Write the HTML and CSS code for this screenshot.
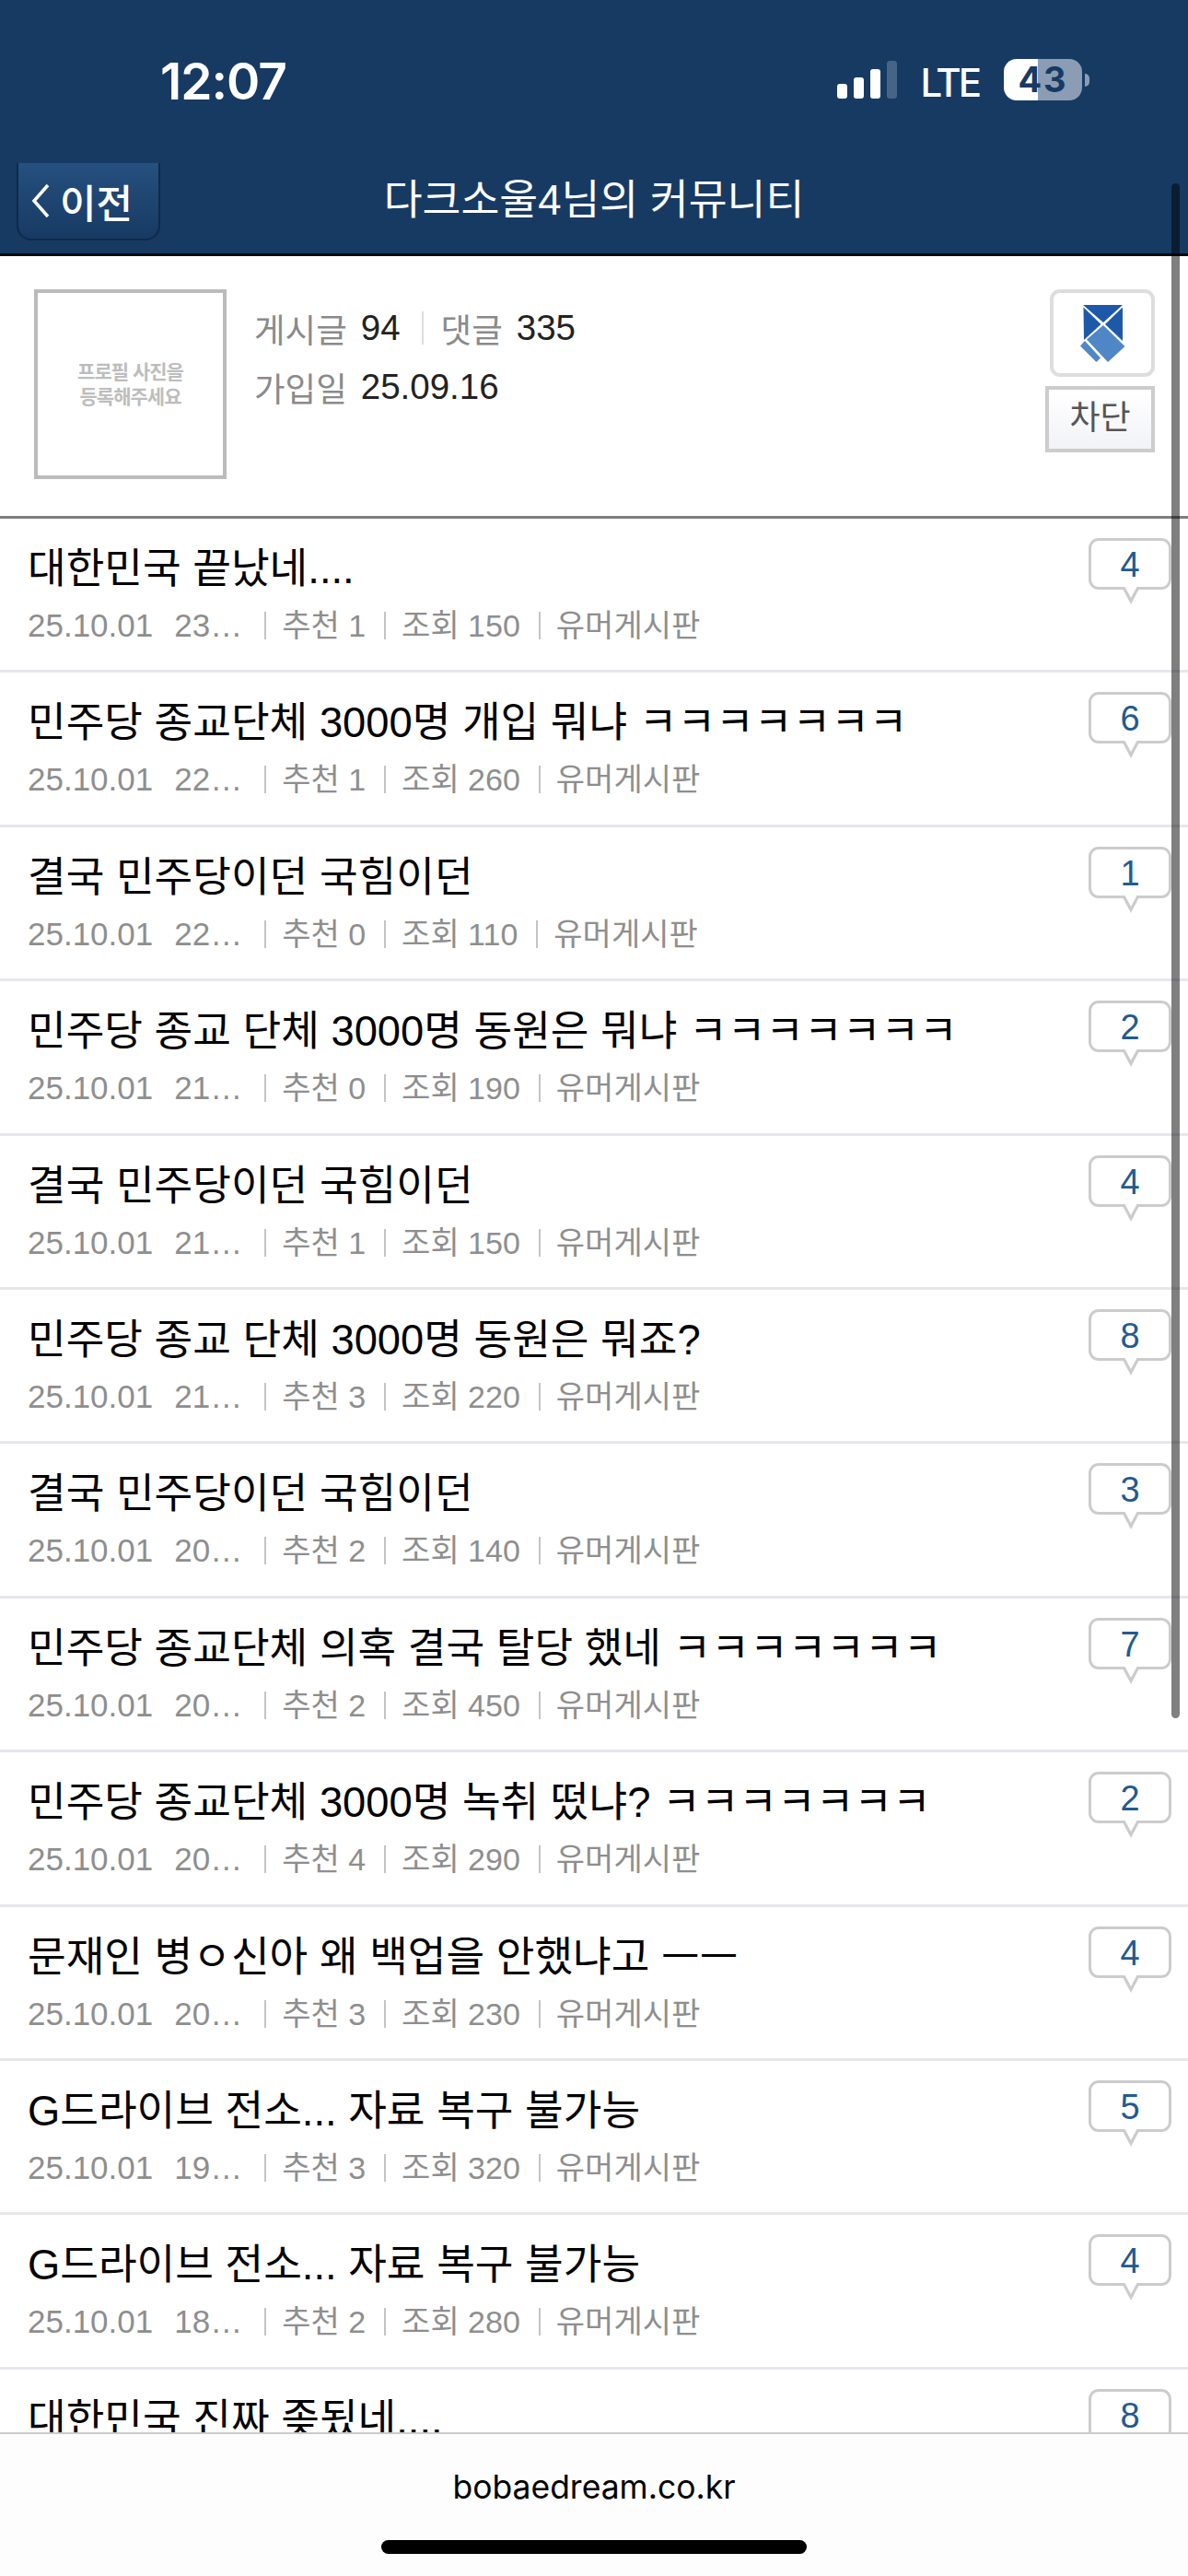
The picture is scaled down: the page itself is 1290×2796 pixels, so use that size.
FILE: index.html

```html
<!DOCTYPE html>
<html lang="ko">
<head>
  <meta charset="UTF-8" />
  <meta name="viewport" content="width=device-width, initial-scale=1.0" />
  <title>다크소울4님의 커뮤니티</title>
  <link rel="stylesheet" href="styles.css">
</head>
<body>
  <div class="top">
    <div class="status">
      <span class="clock">12:07</span>
      <div class="status-right">
        <div class="signal">
          <i class="s1"></i><i class="s2"></i><i class="s3"></i><i class="s4"></i>
        </div>
        <span class="lte">LTE</span>
        <div class="battery"><span>43</span></div>
        <i class="battery-nub"></i>
      </div>
    </div>
    <div class="nav">
      <a class="back">
        <svg class="back-arrow" width="20" height="38" viewBox="0 0 20 38"><path d="M18 2 3 19l15 17" fill="none" stroke="#fff" stroke-width="3.5"/></svg>
        이전
      </a>
      <h1>다크소울4님의 커뮤니티</h1>
    </div>
  </div>

  <div class="profile">
    <div class="photo">프로필 사진을<br>등록해주세요</div>
    <div class="stats">
      <div class="stat-line">
        <span class="label">게시글</span><b>94</b><i class="stat-sep"></i>
        <span class="label">댓글</span><b>335</b>
      </div>
      <div class="stat-line">
        <span class="label">가입일</span><b>25.09.16</b>
      </div>
    </div>
    <div class="actions">
      <div class="badge">
        <svg width="49" height="62" viewBox="0 0 49 62">
          <path d="M3 0H46L25 19Z" fill="#1d59a8"/>
          <path d="M3.500 2.500 22.500 21 4 38Z" fill="#1d59a8"/>
          <path d="M46 2.500 27 21 46 39Z" fill="#1d59a8"/>
          <path d="M25 22 48.500 45 30 62 7 37.500Z" fill="#4f87c6"/>
          <path d="M5 39 22 57.500 17.500 62 0 44.500Z" fill="#4f87c6"/>
        </svg>
      </div>
      <a class="block-btn">차단</a>
    </div>
  </div>

  <ul class="list">
    <li class="row">
      <div class="row-main">
        <div class="subject">대한민국 끝났네....</div>
        <div class="meta"><span class="date">25.10.01</span><span class="time">23…</span><span>추천 1</span><span>조회 150</span><span>유머게시판</span></div>
      </div>
      <div class="bubble">4</div>
    </li>
    <li class="row">
      <div class="row-main">
        <div class="subject">민주당 종교단체 3000명 개입 뭐냐 ㅋㅋㅋㅋㅋㅋㅋ</div>
        <div class="meta"><span class="date">25.10.01</span><span class="time">22…</span><span>추천 1</span><span>조회 260</span><span>유머게시판</span></div>
      </div>
      <div class="bubble">6</div>
    </li>
    <li class="row">
      <div class="row-main">
        <div class="subject">결국 민주당이던 국힘이던</div>
        <div class="meta"><span class="date">25.10.01</span><span class="time">22…</span><span>추천 0</span><span>조회 110</span><span>유머게시판</span></div>
      </div>
      <div class="bubble">1</div>
    </li>
    <li class="row">
      <div class="row-main">
        <div class="subject">민주당 종교 단체 3000명 동원은 뭐냐 ㅋㅋㅋㅋㅋㅋㅋ</div>
        <div class="meta"><span class="date">25.10.01</span><span class="time">21…</span><span>추천 0</span><span>조회 190</span><span>유머게시판</span></div>
      </div>
      <div class="bubble">2</div>
    </li>
    <li class="row">
      <div class="row-main">
        <div class="subject">결국 민주당이던 국힘이던</div>
        <div class="meta"><span class="date">25.10.01</span><span class="time">21…</span><span>추천 1</span><span>조회 150</span><span>유머게시판</span></div>
      </div>
      <div class="bubble">4</div>
    </li>
    <li class="row">
      <div class="row-main">
        <div class="subject">민주당 종교 단체 3000명 동원은 뭐죠?</div>
        <div class="meta"><span class="date">25.10.01</span><span class="time">21…</span><span>추천 3</span><span>조회 220</span><span>유머게시판</span></div>
      </div>
      <div class="bubble">8</div>
    </li>
    <li class="row">
      <div class="row-main">
        <div class="subject">결국 민주당이던 국힘이던</div>
        <div class="meta"><span class="date">25.10.01</span><span class="time">20…</span><span>추천 2</span><span>조회 140</span><span>유머게시판</span></div>
      </div>
      <div class="bubble">3</div>
    </li>
    <li class="row">
      <div class="row-main">
        <div class="subject">민주당 종교단체 의혹 결국 탈당 했네 ㅋㅋㅋㅋㅋㅋㅋ</div>
        <div class="meta"><span class="date">25.10.01</span><span class="time">20…</span><span>추천 2</span><span>조회 450</span><span>유머게시판</span></div>
      </div>
      <div class="bubble">7</div>
    </li>
    <li class="row">
      <div class="row-main">
        <div class="subject">민주당 종교단체 3000명 녹취 떴냐? ㅋㅋㅋㅋㅋㅋㅋ</div>
        <div class="meta"><span class="date">25.10.01</span><span class="time">20…</span><span>추천 4</span><span>조회 290</span><span>유머게시판</span></div>
      </div>
      <div class="bubble">2</div>
    </li>
    <li class="row">
      <div class="row-main">
        <div class="subject">문재인 병ㅇ신아 왜 백업을 안했냐고 ㅡㅡ</div>
        <div class="meta"><span class="date">25.10.01</span><span class="time">20…</span><span>추천 3</span><span>조회 230</span><span>유머게시판</span></div>
      </div>
      <div class="bubble">4</div>
    </li>
    <li class="row">
      <div class="row-main">
        <div class="subject">G드라이브 전소... 자료 복구 불가능</div>
        <div class="meta"><span class="date">25.10.01</span><span class="time">19…</span><span>추천 3</span><span>조회 320</span><span>유머게시판</span></div>
      </div>
      <div class="bubble">5</div>
    </li>
    <li class="row">
      <div class="row-main">
        <div class="subject">G드라이브 전소... 자료 복구 불가능</div>
        <div class="meta"><span class="date">25.10.01</span><span class="time">18…</span><span>추천 2</span><span>조회 280</span><span>유머게시판</span></div>
      </div>
      <div class="bubble">4</div>
    </li>
    <li class="row">
      <div class="row-main">
        <div class="subject">대한민국 진짜 좆됬네....</div>
      </div>
      <div class="bubble">8</div>
    </li>
  </ul>

  <div class="scrollbar"></div>

  <div class="browser-bar">
    <span class="host">bobaedream.co.kr</span>
    <i class="home-bar"></i>
  </div>
</body>
</html>
```

FILE: styles.css

```css
* {
  box-sizing: border-box;
}
html, body {
  margin: 0;
  height: 2796px;
  overflow: hidden;
}
body {
  position: relative;
  background: #fff;
  font-family: "Liberation Sans", "Noto Sans CJK KR", sans-serif;
  color: #000;
}
i {
  display: block;
}

/* top */
.top {
  height: 278px;
  background: #173a63;
  border-bottom: 3px solid #0c0c0c;
  color: #fff;
}
.status {
  height: 177px;
  display: flex;
  justify-content: space-between;
  padding: 61px 107px 0 174px;
}
.clock {
  font-family: Inter, sans-serif;
  font-size: 55px;
  font-weight: 600;
  line-height: 54px;
  letter-spacing: -1px;
}
.status-right {
  display: flex;
  align-items: flex-start;
  height: 46px;
  margin-top: 3px;
}
.signal {
  display: flex;
  align-items: flex-end;
  gap: 7px;
  height: 41px;
  margin: 2px 25px 0 0;
}
.signal i {
  width: 11px;
  background: #fff;
  border-radius: 3px;
}
.s1 { height: 16px; }
.s2 { height: 23px; }
.s3 { height: 32px; }
.signal .s4 { height: 41px; background: #466485; }
.lte {
  font-family: Inter, sans-serif;
  font-size: 42px;
  font-weight: 500;
  line-height: 44px;
  letter-spacing: -3px;
  margin: 4px 27px 0 0;
}
.battery {
  width: 85px;
  height: 45px;
  border-radius: 14px;
  background: linear-gradient(to right, #fff 44%, #8a9db4 44%);
  color: #173a63;
  text-align: center;
  font-family: Inter, sans-serif;
  font-size: 38px;
  font-weight: 700;
  line-height: 45px;
  letter-spacing: 2px;
}
.battery-nub {
  width: 5px;
  height: 14px;
  margin: 16px 0 0 3px;
  background: #8a9db4;
  border-radius: 0 6px 6px 0;
}
.nav {
  position: relative;
  height: 98px;
}
.back {
  display: flex;
  align-items: center;
  gap: 11px;
  width: 156px;
  height: 84px;
  margin-left: 18px;
  padding-left: 14px;
  border: 2px solid #0f2a4b;
  border-top: 0;
  border-radius: 0 0 16px 16px;
  background: linear-gradient(#26507f, #173a63);
  font-size: 43px;
  font-weight: 500;
}
.nav h1 {
  position: absolute;
  left: 0;
  right: 0;
  top: 13px;
  margin: 0;
  text-align: center;
  font-size: 45.500px;
  line-height: 56px;
  font-weight: 400;
}

/* profile */
.profile {
  height: 285px;
  display: flex;
  padding: 36px 36px 0 37px;
  border-bottom: 3px solid #7f7f7f;
}
.photo {
  width: 209px;
  height: 206px;
  border: 4px solid #bbb;
  display: flex;
  align-items: center;
  justify-content: center;
  text-align: center;
  color: #bdbdbd;
  font-size: 21px;
  line-height: 27px;
  font-weight: 700;
  letter-spacing: -1px;
}
.stats {
  flex: 1;
  padding: 21px 0 0 30px;
}
.stat-line {
  display: flex;
  align-items: center;
  height: 42px;
  margin-bottom: 22px;
  font-size: 36.500px;
}
.stat-line b {
  font-weight: 400;
  font-size: 38.500px;
  color: #222;
  margin-left: 15px;
}
.label {
  color: #8a8a8a;
}
.stat-sep {
  width: 2px;
  height: 36px;
  margin: 0 19px 0 23px;
  background: #ddd;
}
.actions {
  width: 119px;
  display: flex;
  flex-direction: column;
  align-items: flex-end;
  gap: 10px;
}
.badge {
  width: 114px;
  height: 95px;
  border: 4px solid #ddd;
  border-radius: 11px;
  display: flex;
  align-items: center;
  justify-content: center;
}
.block-btn {
  width: 119px;
  height: 72px;
  border: 4px solid #ccc;
  background: linear-gradient(#fff, #f2f3f7);
  color: #555;
  font-size: 36px;
  line-height: 62px;
  text-align: center;
}

/* list */
.list {
  margin: 0;
  padding: 0;
  list-style: none;
}
.row {
  height: 167.4px;
  display: flex;
  justify-content: space-between;
  padding: 25px 18px 0 30px;
  border-bottom: 3px solid #e6e6ec;
}
.subject {
  font-size: 45.300px;
  line-height: 60px;
  white-space: nowrap;
}
.meta {
  display: flex;
  align-items: center;
  height: 36px;
  margin-top: 13px;
  font-size: 34px;
  color: #8e8e8e;
  white-space: nowrap;
}
.meta span + span {
  margin-left: 20px;
  padding-left: 17px;
  border-left: 2px solid #c4c4c4;
  line-height: 30px;
}
.meta .date {
  font-size: 35px;
  margin-right: 23px;
}
.meta .time {
  font-size: 35px;
  margin: 0 4px 0 0;
  padding-left: 0;
  border-left: 0;
}
.bubble {
  position: relative;
  top: -4px;
  width: 90px;
  height: 56px;
  border: 3px solid #ccc;
  border-radius: 11px;
  background: #fff;
  color: #235a90;
  font-size: 38px;
  line-height: 52px;
  text-align: center;
}
.bubble::before {
  content: "";
  position: absolute;
  left: 33px;
  bottom: -19px;
  width: 0;
  height: 0;
  border-left: 10px solid transparent;
  border-right: 10px solid transparent;
  border-top: 19px solid #ccc;
}
.bubble::after {
  content: "";
  position: absolute;
  left: 36px;
  bottom: -12px;
  width: 0;
  height: 0;
  border-left: 7px solid transparent;
  border-right: 7px solid transparent;
  border-top: 13px solid #fff;
}

/* overlays */
.scrollbar {
  position: absolute;
  left: 1272px;
  top: 199px;
  width: 9px;
  height: 1666px;
  border-radius: 5px;
  background: rgba(0, 0, 0, 0.5);
}
.browser-bar {
  position: absolute;
  left: 0;
  right: 0;
  bottom: 0;
  height: 156px;
  background: #fdfdfd;
  border-top: 2px solid #ccc;
  display: flex;
  flex-direction: column;
  align-items: center;
}
.host {
  margin-top: 38px;
  font-family: Inter, sans-serif;
  font-size: 35.500px;
  line-height: 40px;
}
.home-bar {
  width: 462px;
  height: 15px;
  margin-top: 37px;
  background: #000;
  border-radius: 8px;
}
```
